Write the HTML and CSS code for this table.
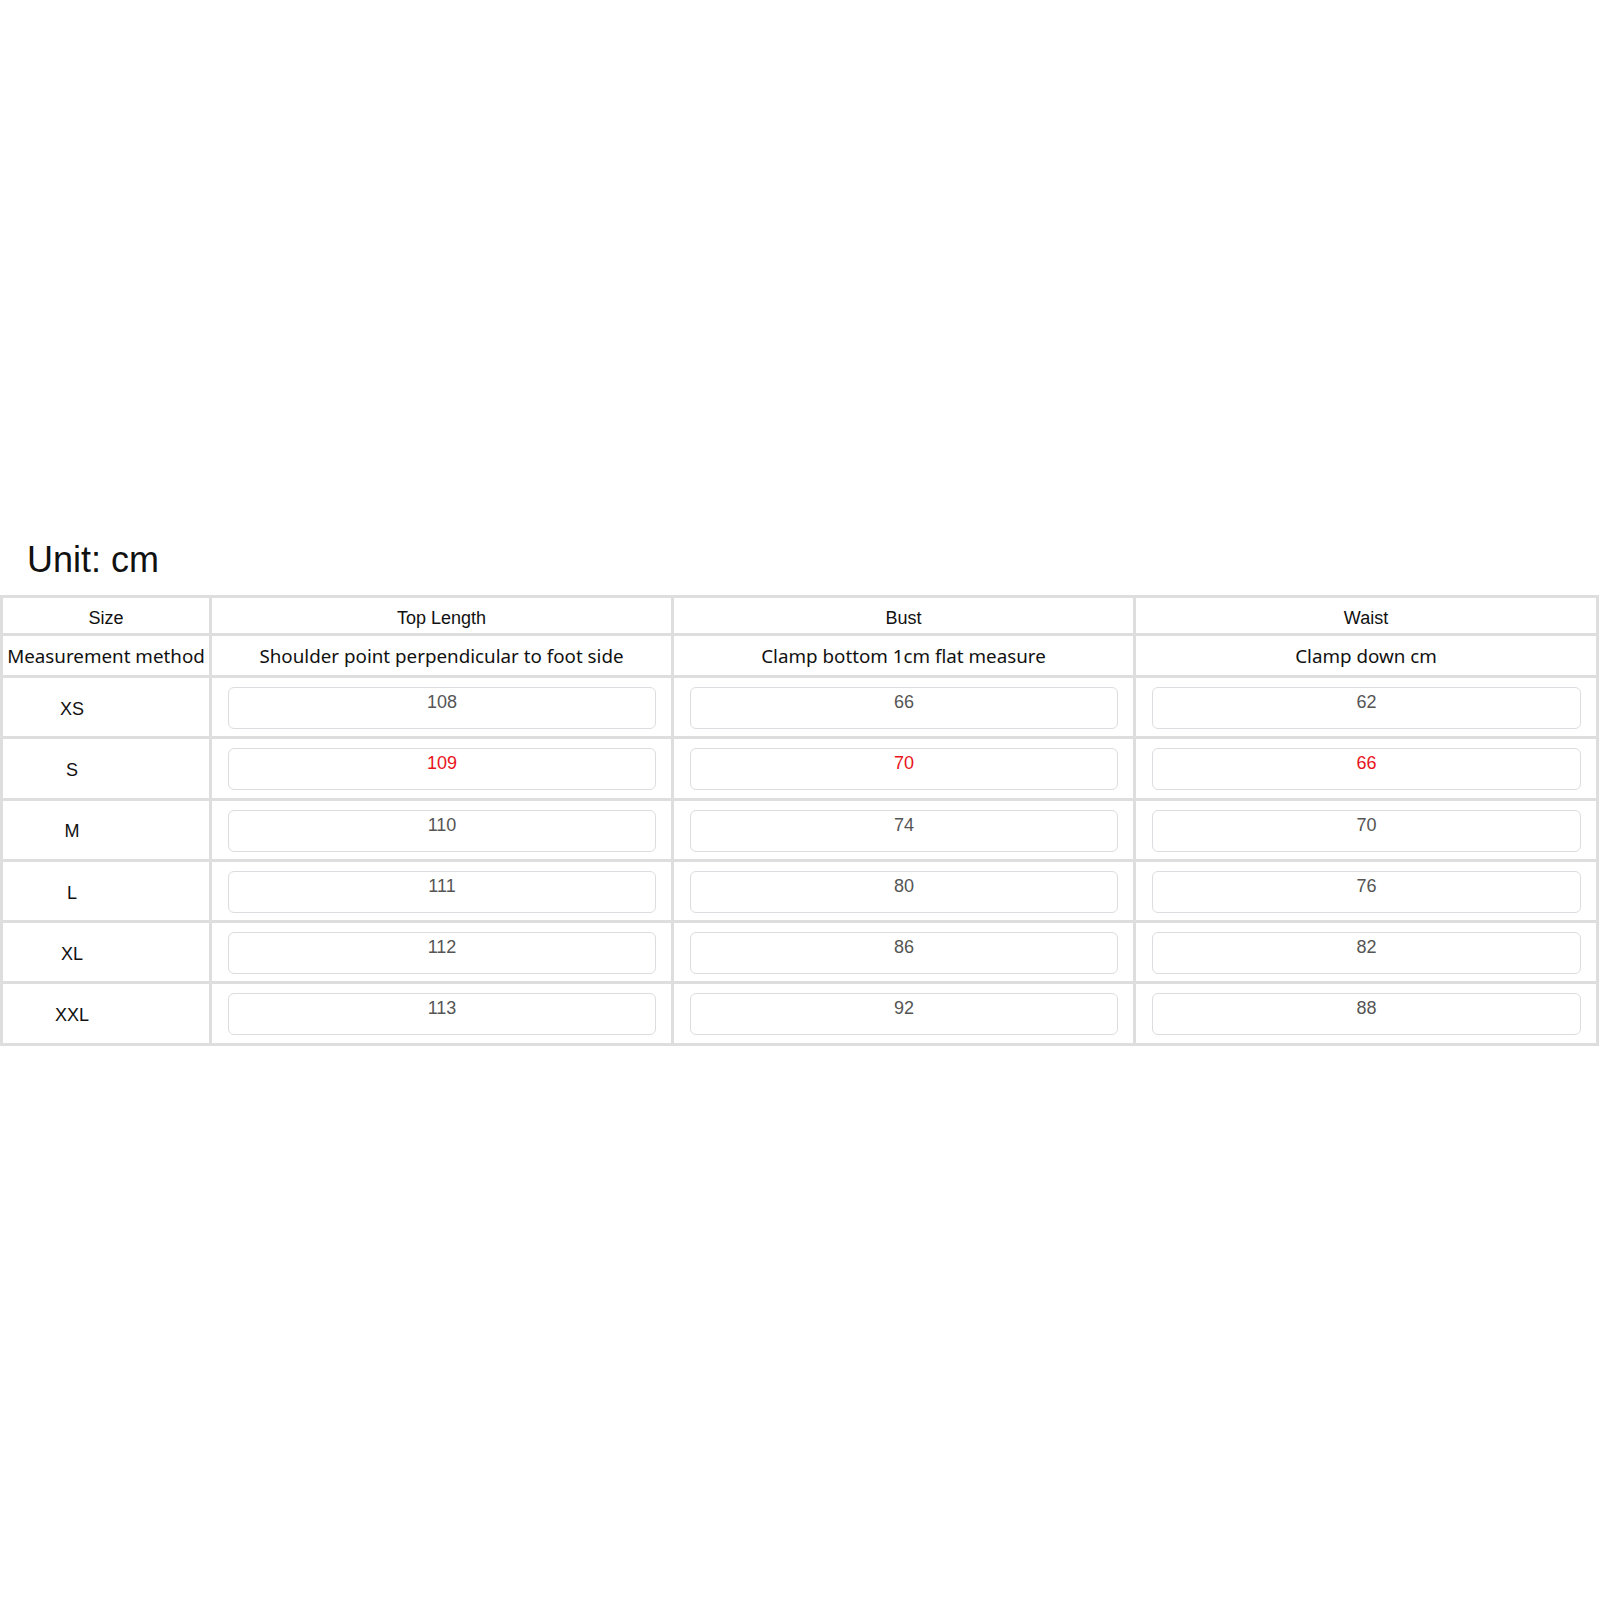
FILE: index.html
```html
<!DOCTYPE html>
<html>
<head>
<meta charset="utf-8">
<link rel="stylesheet" href="styles.css">
</head>
<body>
<div class="page">
  <div class="title">Unit: cm</div>
  <div class="chart">
    <div class="cell head">Size</div>
    <div class="cell head">Top Length</div>
    <div class="cell head">Bust</div>
    <div class="cell head">Waist</div>

    <div class="cell method">Measurement method</div>
    <div class="cell method">Shoulder point perpendicular to foot side</div>
    <div class="cell method">Clamp bottom 1cm flat measure</div>
    <div class="cell method">Clamp down cm</div>

    <div class="cell size">XS</div>
    <div class="cell val"><div class="box">108</div></div>
    <div class="cell val"><div class="box">66</div></div>
    <div class="cell val"><div class="box">62</div></div>

    <div class="cell size">S</div>
    <div class="cell val"><div class="box red">109</div></div>
    <div class="cell val"><div class="box red">70</div></div>
    <div class="cell val"><div class="box red">66</div></div>

    <div class="cell size">M</div>
    <div class="cell val"><div class="box">110</div></div>
    <div class="cell val"><div class="box">74</div></div>
    <div class="cell val"><div class="box">70</div></div>

    <div class="cell size">L</div>
    <div class="cell val"><div class="box">111</div></div>
    <div class="cell val"><div class="box">80</div></div>
    <div class="cell val"><div class="box">76</div></div>

    <div class="cell size">XL</div>
    <div class="cell val"><div class="box">112</div></div>
    <div class="cell val"><div class="box">86</div></div>
    <div class="cell val"><div class="box">82</div></div>

    <div class="cell size">XXL</div>
    <div class="cell val"><div class="box">113</div></div>
    <div class="cell val"><div class="box">92</div></div>
    <div class="cell val"><div class="box">88</div></div>
  </div>
</div>
</body>
</html>
```

FILE: styles.css
```css
html, body {
  margin: 0;
  padding: 0;
  background: #ffffff;
}

.page {
  padding-top: 540px;
}

.title {
  font-family: "Liberation Sans", Arial, sans-serif;
  font-size: 36px;
  line-height: 40px;
  height: 40px;
  color: #111111;
  padding-left: 27px;
  margin-bottom: 15px;
}

.chart {
  width: 1599px;
  box-sizing: border-box;
  display: grid;
  grid-template-columns: 206px 459px 459px 460px;
  grid-template-rows: 35px 39px repeat(6, 58.3px);
  gap: 3px;
  padding: 3px;
  background: #dedede;
}

.cell {
  background: #ffffff;
  display: flex;
  align-items: center;
  justify-content: center;
  color: #111111;
  box-sizing: border-box;
}

.head {
  font-family: "Liberation Sans", Arial, sans-serif;
  font-size: 18px;
  padding-top: 5px;
}

.method {
  font-family: "Noto Sans", sans-serif;
  font-size: 18.8px;
  white-space: nowrap;
}

.size {
  font-family: "Liberation Sans", Arial, sans-serif;
  font-size: 18px;
  padding-right: 68px;
  padding-top: 4px;
}

.val {
  align-items: flex-start;
  padding: 9px 15px 0 16px;
}

.box {
  flex: 1;
  height: 42px;
  box-sizing: border-box;
  border: 1.5px solid #dcdde0;
  border-radius: 6px;
  text-align: center;
  padding-top: 4px;
  font-family: "Liberation Sans", Arial, sans-serif;
  font-size: 18px;
  line-height: 21px;
  color: #555555;
}

.box.red {
  color: #e8141c;
}
```
